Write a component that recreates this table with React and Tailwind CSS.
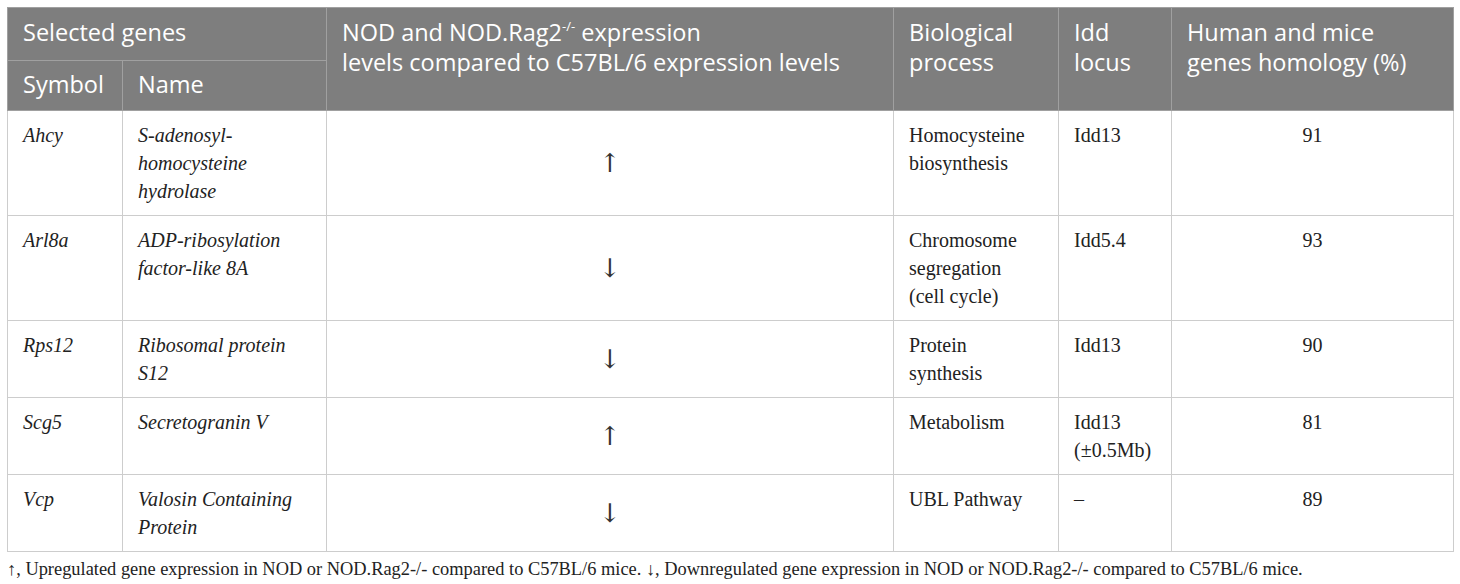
const rows = [
  { sym: "Ahcy", name: ["S-adenosyl-", "homocysteine", "hydrolase"], arrow: "↑", proc: ["Homocysteine", "biosynthesis"], idd: ["Idd13"], hom: "91" },
  { sym: "Arl8a", name: ["ADP-ribosylation", "factor-like 8A"], arrow: "↓", proc: ["Chromosome", "segregation", "(cell cycle)"], idd: ["Idd5.4"], hom: "93" },
  { sym: "Rps12", name: ["Ribosomal protein", "S12"], arrow: "↓", proc: ["Protein", "synthesis"], idd: ["Idd13"], hom: "90" },
  { sym: "Scg5", name: ["Secretogranin V"], arrow: "↑", proc: ["Metabolism"], idd: ["Idd13", "(±0.5Mb)"], hom: "81" },
  { sym: "Vcp", name: ["Valosin Containing", "Protein"], arrow: "↓", proc: ["UBL Pathway"], idd: ["–"], hom: "89" },
];

const serif = "font-['Liberation_Serif',serif]";
const td = "border border-[#cdcdcd] px-[15px] pt-[10px] pb-[10px] align-top text-[20px] leading-[28px] text-[#222]";
const th = "border border-[#a0a0a0] px-[15px] text-left align-top font-normal";

// lines kept as given so the cells wrap like the source table
function Lines({ items }) {
  return items.map((l, i) => (
    <span key={i} className="block">
      {l}
    </span>
  ));
}

function App() {
  return (
    <div className="min-h-screen bg-white pt-[7px] pl-[7px] pr-[7px]">
      <table className={`table-fixed border-collapse w-[1446px] ${serif}`}>
        <colgroup>
          <col className="w-[115px]" />
          <col className="w-[204px]" />
          <col className="w-[567px]" />
          <col className="w-[165px]" />
          <col className="w-[113px]" />
          <col className="w-[282px]" />
        </colgroup>
        <thead className="font-['Open_Sans',sans-serif] text-white text-[23.5px] leading-[29.5px]">
          <tr className="h-[53px] bg-[#7e7e7e]">
            <th colSpan={2} className={`${th} pt-[10px]`}>
              Selected genes
            </th>
            <th rowSpan={2} className={`${th} pt-[10px]`}>
              <span className="block">
                NOD and NOD.Rag2<sup className="text-[13px] -top-[10px]">-/-</sup> expression
              </span>
              <span className="block">levels compared to C57BL/6 expression levels</span>
            </th>
            <th rowSpan={2} className={`${th} pt-[10px]`}>
              <Lines items={["Biological", "process"]} />
            </th>
            <th rowSpan={2} className={`${th} pt-[10px]`}>
              <Lines items={["Idd", "locus"]} />
            </th>
            <th rowSpan={2} className={`${th} pt-[10px]`}>
              <Lines items={["Human and mice", "genes homology (%)"]} />
            </th>
          </tr>
          <tr className="h-[50px] bg-[#7e7e7e]">
            <th className={`${th} pt-[9px]`}>Symbol</th>
            <th className={`${th} pt-[9px]`}>Name</th>
          </tr>
        </thead>
        <tbody>
          {rows.map((r) => (
            <tr key={r.sym}>
              <td className={`${td} italic`}>{r.sym}</td>
              <td className={`${td} italic`}>
                <Lines items={r.name} />
              </td>
              <td className={`${td} !align-middle text-center !text-[26px] !text-[#333] font-['DejaVu_Serif',serif]`}>
                {r.arrow}
              </td>
              <td className={td}>
                <Lines items={r.proc} />
              </td>
              <td className={td}>
                <Lines items={r.idd} />
              </td>
              <td className={`${td} text-center`}>{r.hom}</td>
            </tr>
          ))}
        </tbody>
      </table>
      <p className={`${serif} text-[18.4px] leading-[24px] text-[#222] mt-[5px]`}>
        ↑, Upregulated gene expression in NOD or NOD.Rag2-/- compared to C57BL/6 mice. ↓, Downregulated gene expression in NOD or NOD.Rag2-/- compared to C57BL/6 mice.
      </p>
    </div>
  );
}

export default App;
